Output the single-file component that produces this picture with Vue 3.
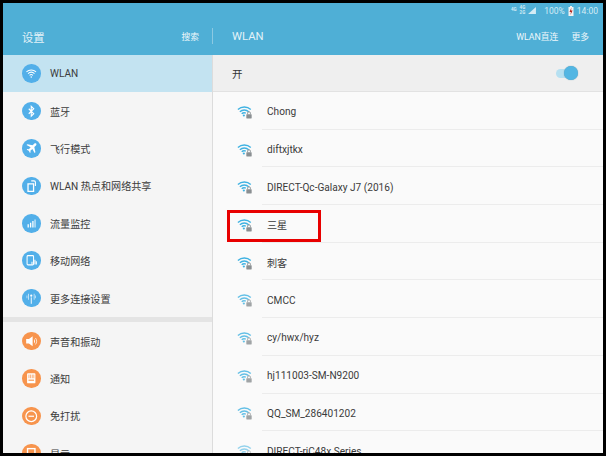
<script setup>
const menuA = [
  { t: 'WLAN', i: 'wifi', active: true },
  { t: '蓝牙', i: 'bt' },
  { t: '飞行模式', i: 'plane' },
  { t: 'WLAN 热点和网络共享', i: 'hotspot' },
  { t: '流量监控', i: 'bars' },
  { t: '移动网络', i: 'mobile' },
  { t: '更多连接设置', i: 'more' }
]
const menuB = [
  { t: '声音和振动', i: 'sound' },
  { t: '通知', i: 'notify' },
  { t: '免打扰', i: 'dnd' },
  { t: '显示', i: 'display' }
]
const nets = [
  { n: 'Chong', o: 1 },
  { n: 'diftxjtkx', o: 1 },
  { n: 'DIRECT-Qc-Galaxy J7 (2016)', o: 1 },
  { n: '三星', o: 1 },
  { n: '刺客', o: 1 },
  { n: 'CMCC', o: 0.8 },
  { n: 'cy/hwx/hyz', o: 0.8 },
  { n: 'hj111003-SM-N9200', o: 0.8 },
  { n: 'QQ_SM_286401202', o: 0.8 },
  { n: 'DIRECT-riC48x Series', o: 0.55 }
]
</script>

<template>
  <div class="frame">
    <div class="screen">
      <header class="top">
        <div class="status">
          <span class="tiny">4G</span>
          <span class="tiny sim">4G<br>2G</span>
          <svg class="sig" viewBox="0 0 9 8"><path d="M0 8 9 0v8z" fill="#d5ecf5" /></svg>
          <span>100%</span>
          <svg class="batt" viewBox="0 0 6 10"><rect x="0.5" y="1" width="5" height="9" fill="#f3f3f3" /><rect x="2" y="0" width="2" height="1" fill="#f3f3f3" /><path d="M3.4 1.5 1.5 6h1.4l-.4 3L4.6 4.6H3.100z" fill="#b3261e" /></svg>
          <span>14:00</span>
        </div>
        <div class="bar">
          <div class="bar-left">
            <span class="title">设置</span>
            <span class="act">搜索</span>
          </div>
          <div class="bar-right">
            <span class="title">WLAN</span>
            <div class="acts">
              <span class="act">WLAN直连</span>
              <span class="act">更多</span>
            </div>
          </div>
        </div>
      </header>
      <div class="body">
        <aside class="side">
          <div v-for="m in menuA" :key="m.t" class="item" :class="{ active: m.active }">
            <span class="ico blue">
              <svg viewBox="0 0 20 20">
                <g v-if="m.i === 'wifi'" fill="none" stroke="#fff" stroke-width="1.100">
                  <path d="M4.800 8.400a8 8 0 0 1 10.400 0" />
                  <path d="M6.500 10.300a5.400 5.400 0 0 1 7 0" />
                  <path d="M8.200 12.200a2.800 2.800 0 0 1 3.600 0" />
                  <circle cx="10" cy="14" r="0.800" fill="#fff" stroke="none" />
                </g>
                <path v-else-if="m.i === 'bt'" d="M7.300 7.300 12.700 12.700 10 15.400V4.600l2.700 2.700L7.300 12.700" fill="none" stroke="#fff" stroke-width="1.200" />
                <path v-else-if="m.i === 'plane'" d="M15.300 4.900c-.6-.6-1.500-.5-2.100.1l-1.800 1.800-5.600-1.200-.9.9 4.500 2.400-2 2.100-1.600-.2-.7.7 2.200 1.300 1.300 2.200.7-.7-.2-1.600 2.100-2 2.400 4.500.9-.9-1.200-5.600 1.800-1.800c.6-.6.700-1.400.200-2z" fill="#fff" />
                <g v-else-if="m.i === 'hotspot'">
                  <path d="M6.500 7.500h6v8h-6z" fill="none" stroke="#fff" stroke-width="1.400" />
                  <path d="M10 4.200h3a1.500 1.500 0 0 1 1.500 1.500v4" fill="none" stroke="#fff" stroke-width="1.200" />
                </g>
                <path v-else-if="m.i === 'bars'" d="M6 11h1.400v3.500H6zM8.600 9.500H10v5H8.600zM11.100 7.500h1.400v7h-1.400zM13.600 6h1v8.500h-1z" fill="#fff" />
                <g v-else-if="m.i === 'mobile'" fill="none" stroke="#fff" stroke-width="1.100">
                  <rect x="5.500" y="5" width="7" height="10" rx="1" />
                  <path d="M14 9.500v5M15.500 11v3.500M10.800 11.500v3" />
                </g>
                <g v-else fill="#fff">
                  <rect x="9.500" y="9" width="1" height="7" />
                  <circle cx="10" cy="7.200" r="1.200" />
                  <path d="M6.500 5h.8v6.500h-.8zM12.700 5h.8v6.500h-.8zM5 7h.7v3H5zM14.300 7h.7v3h-.7z" opacity="0.85" />
                </g>
              </svg>
            </span>
            <span class="label">{{ m.t }}</span>
          </div>
          <div class="gap"></div>
          <div v-for="m in menuB" :key="m.t" class="item">
            <span class="ico orange">
              <svg viewBox="0 0 20 20">
                <g v-if="m.i === 'sound'" fill="#fff">
                  <path d="M4.500 7.500H7.500L11.500 4.500V15.500L7.500 12.500H4.500z" />
                  <path d="M13 7.500c1.300 1.400 1.300 3.600 0 5z" />
                  <path d="M14.500 6.500c1.800 2 1.800 5 0 7" fill="none" stroke="#fff" stroke-width=".8" />
                </g>
                <g v-else-if="m.i === 'notify'">
                  <rect x="5.500" y="4.500" width="9" height="11" rx="1" fill="#fff" />
                  <path d="M7.500 6v4M9.300 6v4M11.100 6v4M12.800 6v4" stroke="#f7944d" stroke-width=".8" />
                  <rect x="7" y="11.500" width="6" height="1.200" fill="#f7944d" />
                </g>
                <g v-else-if="m.i === 'dnd'" fill="none" stroke="#fff" stroke-width="1.300">
                  <circle cx="10" cy="10" r="5.800" />
                  <path d="M7 10h6" />
                </g>
                <g v-else fill="none" stroke="#fff" stroke-width="1.500">
                  <rect x="6" y="5" width="8" height="10" />
                </g>
              </svg>
            </span>
            <span class="label">{{ m.t }}</span>
          </div>
        </aside>
        <main class="main">
          <div class="switch-row">
            <span class="on">开</span>
            <span class="toggle"><i></i></span>
          </div>
          <div class="list">
            <div v-for="w in nets" :key="w.n" class="net">
              <span class="wifi" :style="{ opacity: w.o }">
                <svg viewBox="0 0 18 15">
                  <g fill="none" stroke="#3fb2e2" stroke-width="1.500">
                    <path d="M1 4.800a10.500 10.500 0 0 1 14.500 0" />
                    <path d="M3.200 7.200a7.300 7.300 0 0 1 10 0" />
                    <path d="M5.300 9.500a4.200 4.200 0 0 1 4.600-.7" />
                  </g>
                  <circle cx="7.700" cy="11.500" r="1.200" fill="#3fb2e2" />
                  <rect x="10.500" y="10" width="6" height="4.800" rx=".5" fill="#8a8f92" />
                  <path d="M11.900 10V8.800a1.600 1.600 0 0 1 3.200 0V10" fill="none" stroke="#8a8f92" stroke-width="1" />
                </svg>
              </span>
              <span class="name">{{ w.n }}</span>
            </div>
          </div>
          <div class="mark"></div>
        </main>
      </div>
    </div>
  </div>
</template>

<style scoped>
.frame {
  width: 606px;
  height: 456px;
  box-sizing: border-box;
  padding: 3px;
  background: #000;
  font-family: Roboto, "Noto Sans CJK SC", sans-serif;
  overflow: hidden;
}
.screen {
  width: 600px;
  height: 450px;
  display: flex;
  flex-direction: column;
  overflow: hidden;
  background: #fafafa;
}
.top {
  height: 52px;
  flex: none;
  background: #4fafd6;
  color: #eef7fb;
}
.status {
  height: 15px;
  display: flex;
  align-items: center;
  justify-content: flex-end;
  gap: 3px;
  padding: 0 5px 0 0;
  box-sizing: border-box;
  font-size: 8.500px;
  color: #d5ecf5;
}
.tiny {
  font-size: 4.500px;
  line-height: 4.500px;
  font-weight: 700;
}
.sim {
  text-align: center;
}
.sig {
  width: 8px;
  height: 7px;
  margin-right: 5px;
}
.batt {
  width: 6px;
  height: 10px;
}
.bar {
  display: flex;
  height: 37px;
}
.bar-left {
  width: 210px;
  flex: none;
  box-sizing: border-box;
  display: flex;
  align-items: center;
  justify-content: space-between;
  padding: 0 14px 0 19px;
  position: relative;
}
.bar-left::after {
  content: "";
  position: absolute;
  right: 0;
  top: 10px;
  height: 16px;
  width: 1px;
  background: #8cc9e2;
}
.bar-right {
  flex: 1;
  display: flex;
  align-items: center;
  justify-content: space-between;
  padding: 0 14px 0 19px;
}
.acts {
  display: flex;
  gap: 13px;
}
.title {
  font-size: 11.300px;
  color: #e3f2f8;
}
.act {
  font-size: 8.800px;
  color: #eef7fb;
}
.body {
  flex: 1;
  display: flex;
  min-height: 0;
}
.side {
  width: 210px;
  flex: none;
  background: #f5f5f5;
  border-right: 1px solid #dcdcdc;
  box-sizing: border-box;
  overflow: hidden;
}
.item {
  height: 37.400px;
  display: flex;
  align-items: center;
  padding-left: 19px;
  gap: 9.500px;
}
.item.active {
  background: #c3e3f1;
}
.ico {
  width: 18.500px;
  height: 18.500px;
  border-radius: 50%;
  flex: none;
  display: block;
}
.ico svg {
  width: 100%;
  height: 100%;
  display: block;
}
.blue {
  background: #52afe9;
}
.orange {
  background: #f7944d;
}
.label {
  font-size: 10.100px;
  color: #3c3c3c;
  white-space: nowrap;
}
.gap {
  height: 5.600px;
  background: #e4e4e4;
}
.main {
  flex: 1;
  min-width: 0;
  position: relative;
  display: flex;
  flex-direction: column;
  overflow: hidden;
}
.switch-row {
  height: 37px;
  flex: none;
  box-sizing: border-box;
  background: #efefef;
  border-bottom: 1px solid #e2e2e2;
  display: flex;
  align-items: center;
  justify-content: space-between;
  padding: 0 26px 0 19px;
}
.on {
  font-size: 10.500px;
  color: #333;
}
.toggle {
  width: 21px;
  height: 9px;
  border-radius: 5px;
  background: #b6e0f1;
  position: relative;
  display: block;
}
.toggle i {
  position: absolute;
  right: -1px;
  top: -3px;
  width: 14px;
  height: 14px;
  border-radius: 50%;
  background: #52b6e3;
  box-shadow: 0 0 1px #5a8aa0;
}
.list {
  flex: 1;
}
.net {
  height: 37.700px;
  box-sizing: border-box;
  display: flex;
  align-items: center;
  padding: 2px 0 0 24px;
  gap: 14px;
  position: relative;
}
.net::after {
  content: "";
  position: absolute;
  left: 49px;
  right: 0;
  bottom: 0;
  height: 1px;
  background: #ececec;
}
.wifi {
  width: 16px;
  height: 14px;
  flex: none;
  display: block;
}
.wifi svg {
  width: 100%;
  height: 100%;
  display: block;
}
.name {
  font-size: 10.100px;
  color: #3a3a3a;
  white-space: nowrap;
}
.mark {
  position: absolute;
  left: 14px;
  top: 155px;
  width: 94px;
  height: 32px;
  box-sizing: border-box;
  border: 3px solid #e80000;
}
</style>
